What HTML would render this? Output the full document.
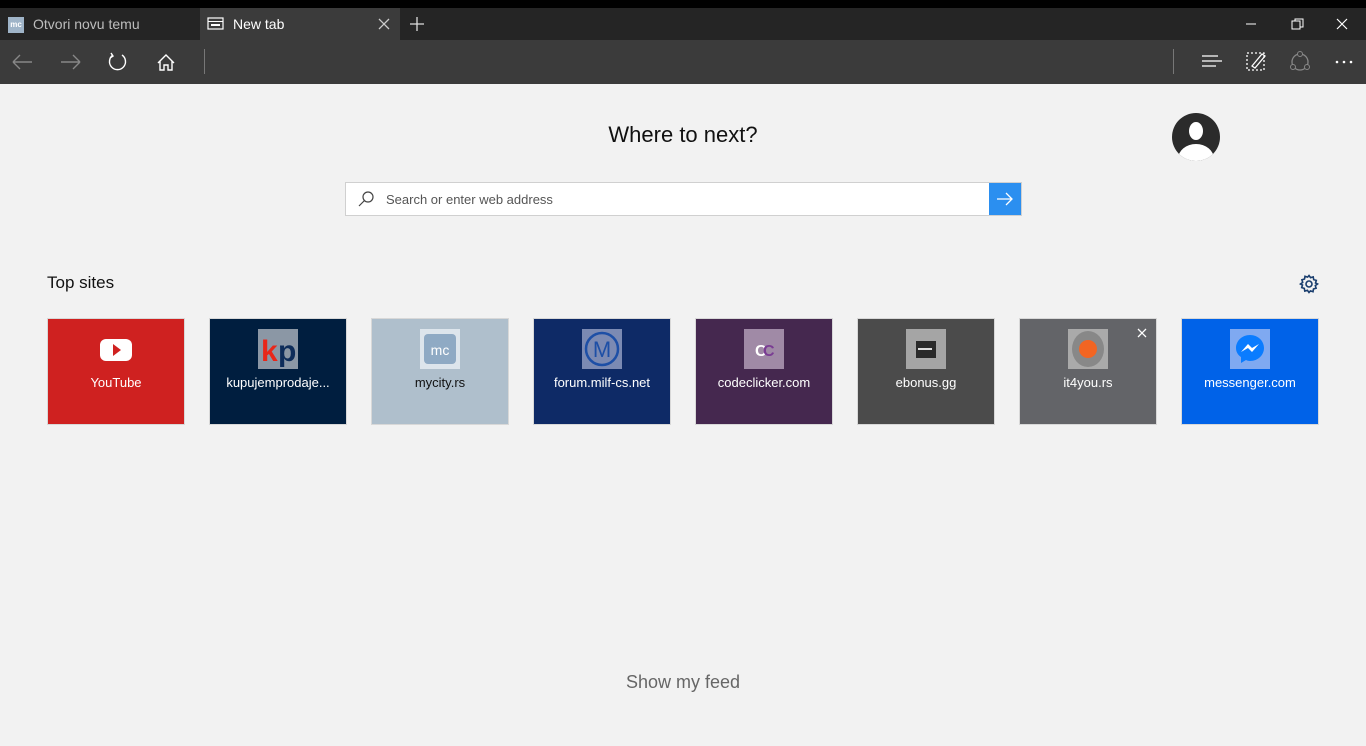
<!DOCTYPE html>
<html><head><meta charset="utf-8"><style>
*{margin:0;padding:0;box-sizing:border-box}
body{width:1366px;height:746px;background:#f2f2f2;font-family:"Liberation Sans",sans-serif;position:relative;overflow:hidden}
.a{position:absolute}
.tile{position:absolute;top:318px;width:138px;height:107px;border:1px solid #d8d8d8;color:#fff;font-size:13px;text-align:center}
.tile .ic{position:absolute;left:48px;top:10px;width:40px;height:40px}
.tile .lb{position:absolute;left:0;right:0;top:56px;white-space:nowrap;overflow:hidden}
</style></head><body>
<div class="a" style="left:0;top:0;width:1366px;height:8px;background:#000"></div>
<div class="a" style="left:0;top:8px;width:1366px;height:32px;background:#252525"></div>
<div class="a" style="left:8px;top:17px;width:16px;height:16px;background:#9fb4c8;color:#fff;font-size:8px;font-weight:bold;line-height:16px;text-align:center">mc</div>
<div class="a" style="left:33px;top:16px;color:#bdbdbd;font-size:14px">Otvori novu temu</div>
<div class="a" style="left:200px;top:8px;width:200px;height:32px;background:#3b3b3b"></div>
<svg class="a" style="left:207px;top:16px" width="18" height="16"><rect x="1" y="2" width="15" height="11" fill="none" stroke="#fff" stroke-width="1.2"/><rect x="1" y="5" width="15" height="1" fill="#fff"/><rect x="4" y="8" width="9" height="2" fill="#fff"/></svg>
<div class="a" style="left:233px;top:16px;color:#fff;font-size:14px">New tab</div>
<svg class="a" style="left:377px;top:17px" width="14" height="14"><path d="M2 2L12 12M12 2L2 12" stroke="#ccc" stroke-width="1.3"/></svg>
<svg class="a" style="left:409px;top:16px" width="16" height="16"><path d="M8 1V15M1 8H15" stroke="#ddd" stroke-width="1.3"/></svg>
<svg class="a" style="left:1240px;top:16px" width="120" height="16"><path d="M6 8H16" stroke="#fff" stroke-width="1"/><rect x="52" y="5" width="8" height="8" fill="none" stroke="#fff"/><path d="M55 5V3H63V11H60" fill="none" stroke="#fff"/><path d="M97 3L107 13M107 3L97 13" stroke="#fff" stroke-width="1.2"/></svg>
<div class="a" style="left:0;top:40px;width:1366px;height:44px;background:#3b3b3b"></div>
<svg class="a" style="left:0;top:40px" width="220" height="44"><g fill="none" stroke-width="1.4"><path d="M13 22H32M13 22L20 15M13 22L20 29" stroke="#888"/><path d="M61 22H80M80 22L73 15M80 22L73 29" stroke="#888"/><path d="M113 15A8 8 0 1 0 122 15M111 13L113 16L110 18" stroke="#fff"/><path d="M158 23L166 15L174 23M160 21V30H164V25H168V30H172V21" stroke="#fff"/></g><rect x="204" y="9" width="1" height="25" fill="#777"/></svg>
<svg class="a" style="left:1170px;top:40px" width="196" height="44"><rect x="3" y="9" width="1" height="25" fill="#777"/><g stroke="#fff" stroke-width="1.3" fill="none"><path d="M32 16H48M32 21H52M32 26H46"/><rect x="77" y="13" width="17" height="17" stroke-dasharray="2 2"/><path d="M82 26L92 14L95 16L85 28Z"/><circle cx="130" cy="22" r="8" stroke="#888"/></g><circle cx="130" cy="14" r="2.5" fill="#3b3b3b" stroke="#888"/><circle cx="123" cy="27" r="2.5" fill="#3b3b3b" stroke="#888"/><circle cx="137" cy="27" r="2.5" fill="#3b3b3b" stroke="#888"/><g fill="#fff"><circle cx="167" cy="22" r="1.3"/><circle cx="174" cy="22" r="1.3"/><circle cx="181" cy="22" r="1.3"/></g></svg>

<div class="a" style="left:0;top:122px;width:1366px;text-align:center;font-size:22px;color:#111">Where to next?</div>
<svg class="a" style="left:1172px;top:113px" width="48" height="48"><defs><clipPath id="c"><circle cx="24" cy="24" r="24"/></clipPath></defs><circle cx="24" cy="24" r="24" fill="#2b2b2b"/><g clip-path="url(#c)" fill="#fff"><ellipse cx="24" cy="18" rx="7" ry="9"/><ellipse cx="24" cy="46" rx="18" ry="15"/></g></svg>
<div class="a" style="left:345px;top:182px;width:677px;height:34px;background:#fff;border:1px solid #d0d0d0"></div>
<svg class="a" style="left:357px;top:190px" width="18" height="18"><circle cx="11" cy="7" r="5" fill="none" stroke="#444" stroke-width="1.2"/><path d="M7.5 10.5L2 16" stroke="#444" stroke-width="1.2"/></svg>
<div class="a" style="left:386px;top:192px;font-size:13px;color:#555">Search or enter web address</div>
<div class="a" style="left:989px;top:183px;width:32px;height:32px;background:#2b8ff0"></div>
<svg class="a" style="left:995px;top:190px" width="20" height="18"><path d="M2 9H17M11 3L17 9L11 15" fill="none" stroke="#fff" stroke-width="1.3"/></svg>

<div class="a" style="left:47px;top:273px;font-size:17px;color:#111">Top sites</div>
<svg class="a" style="left:1298px;top:273px" width="22" height="22"><g fill="none" stroke="#1a3e6e" stroke-width="1.6"><circle cx="11" cy="11" r="3"/><path d="M11 2.5l1.6 2.2 2.6-.8.5 2.7 2.6.8-.8 2.6L19.5 11l-2.2 1.6.8 2.6-2.6.8-.5 2.7-2.6-.8L11 19.5l-1.6-2.2-2.6.8-.5-2.7-2.6-.8.8-2.6L2.5 11l2.2-1.6-.8-2.6 2.6-.8.5-2.7 2.6.8z"/></g></svg>

<div class="tile" style="left:47px;background:#cf2120"><svg class="ic" width="40" height="40"><rect x="4" y="10" width="32" height="22" rx="6" fill="#fff"/><path d="M17 15L25 21L17 27Z" fill="#cf2120"/></svg><div class="lb">YouTube</div></div>
<div class="tile" style="left:209px;background:#001e3f"><svg class="ic" width="40" height="40"><rect width="40" height="40" fill="#8b97a5"/><text x="3" y="32" font-family="Liberation Sans" font-weight="bold" font-size="30" fill="#e8271a">k</text><text x="20" y="32" font-family="Liberation Sans" font-weight="bold" font-size="30" fill="#0e2d5a">p</text></svg><div class="lb">kupujemprodaje...</div></div>
<div class="tile" style="left:371px;background:#afbfcc;color:#111"><svg class="ic" width="40" height="40"><rect width="40" height="40" fill="#dde5ec"/><rect x="4" y="5" width="32" height="30" rx="4" fill="#8faac4"/><text x="20" y="26" text-anchor="middle" font-family="Liberation Sans" font-size="14" fill="#fff">mc</text></svg><div class="lb">mycity.rs</div></div>
<div class="tile" style="left:533px;background:#0e2a66"><svg class="ic" width="40" height="40"><rect width="40" height="40" fill="#7b8ab3"/><circle cx="20" cy="20" r="16" fill="none" stroke="#1d4fa6" stroke-width="2.5"/><text x="20" y="28" text-anchor="middle" font-family="Liberation Sans" font-size="22" fill="#1d4fa6">M</text></svg><div class="lb">forum.milf-cs.net</div></div>
<div class="tile" style="left:695px;background:#45284f"><svg class="ic" width="40" height="40"><rect width="40" height="40" fill="#a08aa6"/><text x="11" y="27" font-family="Liberation Sans" font-weight="bold" font-size="16" fill="#fff">C</text><text x="19" y="27" font-family="Liberation Sans" font-weight="bold" font-size="16" fill="#7a3c93">C</text></svg><div class="lb">codeclicker.com</div></div>
<div class="tile" style="left:857px;background:#4b4b4b"><svg class="ic" width="40" height="40"><rect width="40" height="40" fill="#a5a5a5"/><rect x="10" y="12" width="20" height="17" fill="#2a2a2a"/><rect x="12" y="19" width="14" height="2" fill="#ddd"/></svg><div class="lb">ebonus.gg</div></div>
<div class="tile" style="left:1019px;background:#636468"><svg class="ic" width="40" height="40"><rect width="40" height="40" fill="#aaa"/><ellipse cx="20" cy="20" rx="16" ry="18" fill="#888"/><circle cx="20" cy="20" r="9" fill="#f26522"/></svg><div class="lb">it4you.rs</div><svg class="a" style="left:116px;top:8px" width="12" height="12"><path d="M2 2L10 10M10 2L2 10" stroke="#fff" stroke-width="1.3"/></svg></div>
<div class="tile" style="left:1181px;background:#0062e8"><svg class="ic" width="40" height="40"><rect width="40" height="40" fill="#7fa9f1"/><path d="M20 6C12 6 6 12 6 19C6 23 8 26 11 28V34L16 31C17 31.5 18.5 32 20 32C28 32 34 26 34 19C34 12 28 6 20 6Z" fill="#0a7cff"/><path d="M11 23L18 15L22 19L29 15L22 23L18 19Z" fill="#fff"/></svg><div class="lb">messenger.com</div></div>

<div class="a" style="left:0;top:672px;width:1366px;text-align:center;font-size:18px;color:#666">Show my feed</div>
</body></html>
